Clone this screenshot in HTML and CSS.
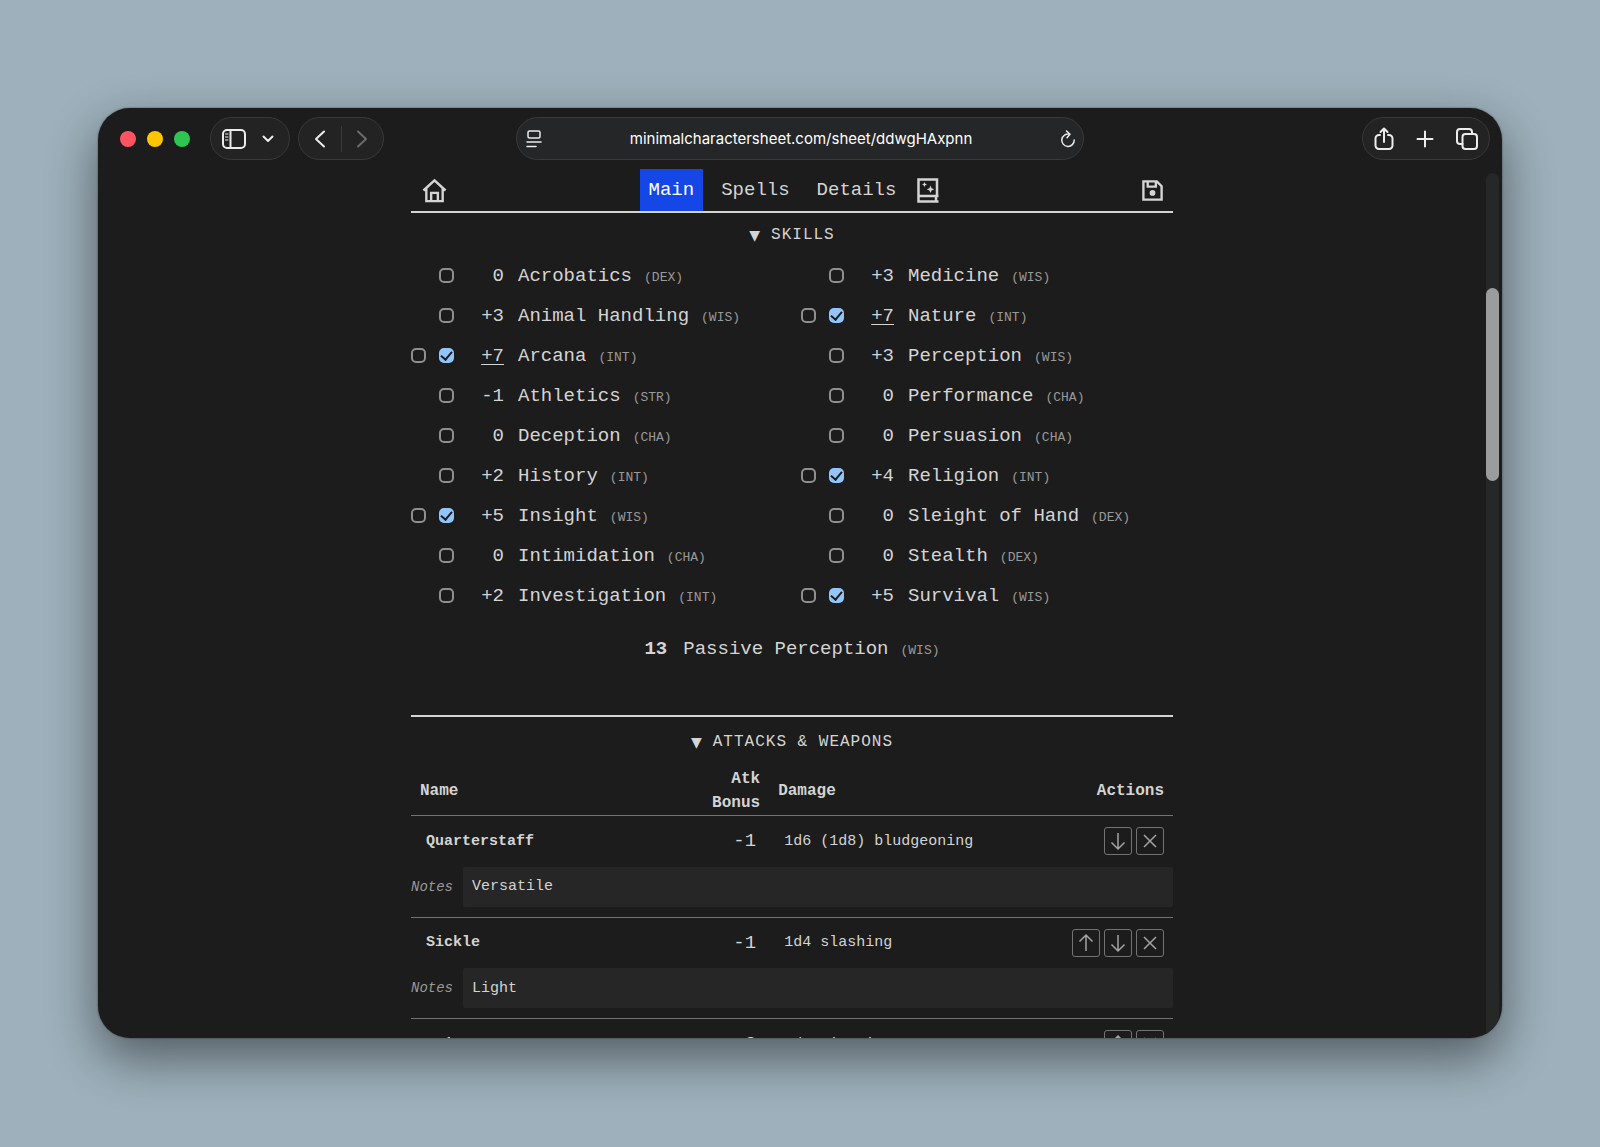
FILE: index.html
```html
<!DOCTYPE html>
<html lang="en">

<head>
    <meta charset="UTF-8">
    <meta name="viewport" content="width=device-width, initial-scale=1.0">
    <title>Minimal Character Sheet</title>
    <link rel="stylesheet" href="styles.css">
</head>

<body>
    <div class="window">
        <header class="toolbar">
            <div class="toolbar-left">
                <div class="lights">
                    <span class="light red"></span>
                    <span class="light yellow"></span>
                    <span class="light green"></span>
                </div>
                <div class="pill pill-sidebar">
                    <button aria-label="Sidebar">
                        <svg width="24" height="20" viewBox="0 0 24 20">
                            <rect x="1" y="1" width="22" height="18" rx="4" />
                            <path d="M8.500 1v18" />
                            <path class="thin" d="M3.500 5h2.500M3.500 8h2.500M3.500 11h2.500" />
                        </svg>
                    </button>
                    <button aria-label="Tab groups">
                        <svg width="12" height="8" viewBox="0 0 12 8">
                            <path d="M1.500 1.500L6 6l4.500-4.500" />
                        </svg>
                    </button>
                </div>
                <div class="pill pill-nav">
                    <button aria-label="Back">
                        <svg width="12" height="18" viewBox="0 0 12 18">
                            <path d="M10 1.500L2 9l8 7.500" />
                        </svg>
                    </button>
                    <span class="divider"></span>
                    <button class="off" aria-label="Forward">
                        <svg width="12" height="18" viewBox="0 0 12 18">
                            <path d="M2 1.500L10 9l-8 7.500" />
                        </svg>
                    </button>
                </div>
            </div>

            <div class="pill address">
                <button aria-label="Page menu">
                    <svg class="line" width="16" height="18" viewBox="0 0 16 18">
                        <rect x="2" y="1" width="12" height="7" rx="1.500" />
                        <path d="M1 12h14M1 16.500h9" />
                    </svg>
                </button>
                <input type="text" id="url" aria-label="Address" value="minimalcharactersheet.com/sheet/ddwgHAxpnn">
                <button aria-label="Reload">
                    <svg class="line" width="16" height="18" viewBox="0 0 16 18">
                        <path d="M9.500 4.200A6.200 6.200 0 1 0 14.200 10M6.500 1L10 4.300L7 7.800" />
                    </svg>
                </button>
            </div>

            <div class="toolbar-right">
                <div class="pill pill-actions">
                    <button aria-label="Share">
                        <svg width="20" height="24" viewBox="0 0 20 24">
                            <path d="M6 8H5a3.500 3.500 0 0 0-3.500 3.500v7A3.500 3.500 0 0 0 5 22h10a3.500 3.500 0 0 0 3.500-3.500v-7A3.500 3.500 0 0 0 15 8h-1M10 15V2M6.500 5L10 1.500L13.500 5" />
                        </svg>
                    </button>
                    <button aria-label="New tab">
                        <svg width="18" height="18" viewBox="0 0 18 18">
                            <path d="M9 1.500v15M1.500 9h15" />
                        </svg>
                    </button>
                    <button aria-label="Show tabs">
                        <svg width="22" height="22" viewBox="0 0 22 22">
                            <rect x="6.500" y="6" width="14.500" height="15" rx="3" />
                            <path d="M6.500 16H4a3 3 0 0 1-3-3V4a3 3 0 0 1 3-3h9a3 3 0 0 1 3 3v2" />
                        </svg>
                    </button>
                </div>
            </div>
        </header>

        <div class="viewport">
            <main class="page">
                <nav class="tabs">
                    <a class="icon-link" href="#" aria-label="Home">
                        <svg width="25" height="25" viewBox="0 0 26 26">
                            <path d="M1.500 13L13 2.500L24.500 13M4.500 11v13h17V11M9.500 24v-8.500h7v8.500" />
                        </svg>
                    </a>
                    <div class="tab-list">
                        <button class="tab active">Main</button>
                        <button class="tab">Spells</button>
                        <button class="tab">Details</button>
                        <button class="icon-link book" aria-label="Spellbook">
                            <svg width="22" height="25" viewBox="0 0 22 25">
                                <path d="M20 18V1.500H1.500v22H21.500M1.500 18h20M19 18v5.500" />
                                <path class="solid" d="M7.500 4l.8 1.700L10 6.500l-1.700.8L7.500 9l-.8-1.700L5 6.500l1.700-.8zM13.500 7.500l1.100 2.700 2.700 1.100-2.700 1.100-1.100 2.700-1.100-2.700-2.700-1.100 2.700-1.100z" />
                            </svg>
                        </button>
                    </div>
                    <button class="icon-link" aria-label="Save">
                        <svg width="23" height="23" viewBox="0 0 24 24">
                            <path d="M2.500 2.500h14l5 5v14h-19zM7 2.500v5.500h8.500V2.500" />
                            <circle class="solid" cx="12" cy="14.500" r="3" />
                        </svg>
                    </button>
                </nav>

                <details class="section" open>
                    <summary><span class="arrow">▼</span>SKILLS</summary>
                    <div class="skills" id="skills"></div>
                    <p class="passive"><b>13</b><span>Passive Perception</span><small>(WIS)</small></p>
                </details>

                <details class="section attacks" open>
                    <summary><span class="arrow">▼</span>ATTACKS &amp; WEAPONS</summary>
                    <table>
                        <thead>
                            <tr>
                                <th class="col-name">Name</th>
                                <th class="col-bonus">Atk Bonus</th>
                                <th class="col-damage">Damage</th>
                                <th class="col-actions">Actions</th>
                            </tr>
                        </thead>
                        <tbody id="attacksTable"></tbody>
                    </table>
                </details>
            </main>
            <div class="scrollbar">
                <div class="thumb"></div>
            </div>
        </div>
    </div>

    <script>
        // name, ability, modifier, proficient
        const skills = [
            ['Acrobatics', 'DEX', '0', false],
            ['Animal Handling', 'WIS', '+3', false],
            ['Arcana', 'INT', '+7', true, 'custom'],
            ['Athletics', 'STR', '-1', false],
            ['Deception', 'CHA', '0', false],
            ['History', 'INT', '+2', false],
            ['Insight', 'WIS', '+5', true],
            ['Intimidation', 'CHA', '0', false],
            ['Investigation', 'INT', '+2', false],
            ['Medicine', 'WIS', '+3', false],
            ['Nature', 'INT', '+7', true, 'custom'],
            ['Perception', 'WIS', '+3', false],
            ['Performance', 'CHA', '0', false],
            ['Persuasion', 'CHA', '0', false],
            ['Religion', 'INT', '+4', true],
            ['Sleight of Hand', 'DEX', '0', false],
            ['Stealth', 'DEX', '0', false],
            ['Survival', 'WIS', '+5', true]
        ];

        const attacks = [
            { name: 'Quarterstaff', bonus: '-1', damage: '1d6 (1d8) bludgeoning', notes: 'Versatile' },
            { name: 'Sickle', bonus: '-1', damage: '1d4 slashing', notes: 'Light' },
            { name: 'Sai', bonus: '+2', damage: '1d4 piercing', notes: '' }
        ];

        const icons = {
            up: 'M10 18V2M3.500 8.500L10 2l6.500 6.500',
            down: 'M10 2v16M3.500 11.500L10 18l6.500-6.500',
            delete: 'M4 4l12 12M16 4L4 16'
        };

        function actionButton(action) {
            return `<button class="action" aria-label="${action}">
                <svg width="20" height="20" viewBox="0 0 20 20"><path d="${icons[action]}" /></svg>
            </button>`;
        }

        function displaySkills() {
            document.getElementById('skills').innerHTML = skills.map(([name, ability, mod, proficient, custom], i) => `
                <div class="skill">
                    <span class="checks">
                        ${proficient ? `<input type="checkbox" aria-label="${name} expertise">` : ''}
                        <input type="checkbox" id="skill${i}" ${proficient ? 'checked' : ''}>
                    </span>
                    <span class="mod ${custom || ''}"><span>${mod}</span></span>
                    <label for="skill${i}">${name}<small>(${ability})</small></label>
                </div>`).join('');
        }

        function displayAttacks() {
            document.getElementById('attacksTable').innerHTML = attacks.map((attack, i) => `
                <tr class="attack">
                    <td><input class="name" type="text" aria-label="Name" value="${attack.name}"></td>
                    <td class="bonus">${attack.bonus}</td>
                    <td><input type="text" aria-label="Damage" value="${attack.damage}"></td>
                    <td><div class="actions">
                        ${i > 0 ? actionButton('up') : ''}
                        ${i < attacks.length - 1 ? actionButton('down') : ''}
                        ${actionButton('delete')}
                    </div></td>
                </tr>
                <tr class="notes">
                    <td colspan="4"><div class="notes-row">
                        <label for="notes${i}">Notes</label>
                        <input type="text" id="notes${i}" value="${attack.notes}">
                    </div></td>
                </tr>`).join('');
        }

        displaySkills();
        displayAttacks();
    </script>
</body>

</html>
```
FILE: styles.css
```css
* {
    box-sizing: border-box;
}

body {
    margin: 0;
    height: 100vh;
    padding: 108px 98px 109px;
    background-color: #9db0bb;
    color: #d4d4d4;
    font-family: "Liberation Mono", monospace;
    font-size: 19px;
    overflow: hidden;
}

button,
input {
    font: inherit;
    color: inherit;
    background: none;
    border: none;
    padding: 0;
    margin: 0;
}

button {
    cursor: pointer;
    display: flex;
    align-items: center;
    justify-content: center;
}

svg {
    display: block;
    fill: none;
    stroke: currentColor;
    stroke-width: 2;
}

svg .solid {
    fill: currentColor;
    stroke: none;
}

.window {
    height: 100%;
    display: flex;
    flex-direction: column;
    background-color: #1c1c1c;
    border-radius: 32px;
    overflow: hidden;
    box-shadow: 0 0 2px rgba(0, 0, 0, 0.5), 0 20px 50px rgba(0, 0, 0, 0.48);
}

/* browser toolbar */
.toolbar {
    display: grid;
    grid-template-columns: 1fr 568px 1fr;
    padding: 9px 12px;
    color: #ececec;
}

.toolbar svg {
    stroke-linecap: round;
    stroke-linejoin: round;
}

.toolbar svg .thin {
    stroke-width: 1;
}

.toolbar svg.line {
    stroke-width: 1.500;
}

.toolbar-left,
.toolbar-right,
.lights,
.pill {
    display: flex;
    align-items: center;
}

.toolbar-left {
    gap: 8px;
}

.toolbar-right {
    justify-content: flex-end;
}

.lights {
    gap: 11px;
    margin: 0 12px 0 10px;
}

.light {
    width: 16px;
    height: 16px;
    border-radius: 50%;
}

.red {
    background-color: #ff5362;
}

.yellow {
    background-color: #ffc600;
}

.green {
    background-color: #30c552;
}

.pill {
    height: 43px;
    border: 1px solid #3a3a3a;
    border-radius: 22px;
    background-color: #232323;
}

.pill-sidebar {
    width: 80px;
    padding: 0 15px 0 11px;
    justify-content: space-between;
}

.pill-nav {
    width: 86px;
    padding: 0 15px;
    justify-content: space-between;
}

.divider {
    width: 1px;
    height: 26px;
    background-color: #3a3a3a;
}

.off {
    color: #6a6a6a;
}

.address {
    padding: 0 7px 0 9px;
    background-color: #252627;
}

.address input {
    flex: 1;
    min-width: 0;
    text-align: center;
    color: #fff;
    font-family: Inter, sans-serif;
    font-size: 15px;
}

.pill-actions {
    width: 128px;
    padding: 0 11px;
    justify-content: space-between;
}

/* page */
.viewport {
    flex: 1;
    min-height: 0;
    display: flex;
}

.page {
    flex: 1;
    overflow: hidden;
}

.tabs,
.section {
    max-width: 762px;
    margin: 0 auto;
}

.tabs {
    display: flex;
    align-items: center;
    justify-content: space-between;
    border-bottom: 2px solid #d4d4d4;
}

.tab-list {
    display: flex;
    align-items: center;
    gap: 9px;
}

.tab {
    height: 42px;
    padding: 0 9px;
}

.tab.active {
    background-color: #1447e6;
    color: #fff;
}

.icon-link {
    color: inherit;
    padding: 0 9px 0 11px;
}

.icon-link.book {
    padding: 0 7px 0 3px;
}

.icon-link svg {
    stroke-width: 2.500;
}

.scrollbar {
    width: 13px;
    margin: 4px 3px 0 0;
    border-radius: 7px 7px 0 0;
    background-color: #262828;
    padding-top: 115px;
}

.thumb {
    height: 193px;
    border-radius: 7px;
    background-color: #9b9d9c;
}

summary {
    display: flex;
    align-items: center;
    justify-content: center;
    height: 43px;
    font-size: 16px;
    letter-spacing: 1px;
}

.arrow {
    font-family: "DejaVu Sans", sans-serif;
    font-size: 14px;
    margin-right: 10px;
}

small {
    font-size: 13px;
    color: #999;
}

/* skills */
.skills {
    display: grid;
    grid-template-columns: 1fr 1fr;
    grid-template-rows: repeat(9, 40px);
    grid-auto-flow: column;
    column-gap: 18px;
}

.skill {
    display: flex;
    align-items: center;
}

.skill small {
    margin-left: 12px;
}

.checks {
    display: flex;
    justify-content: flex-end;
    gap: 13px;
    width: 43px;
    padding-bottom: 2px;
}

.checks input {
    appearance: none;
    display: flex;
    align-items: center;
    justify-content: center;
    width: 15px;
    height: 15px;
    border: 2px solid #8f8f8f;
    border-radius: 5px;
}

.checks input:checked {
    border-color: #93c5fd;
    background-color: #93c5fd;
}

.checks input:checked::after {
    content: "";
    flex: none;
    width: 5px;
    height: 9px;
    margin-bottom: 2px;
    border: solid #1c1c1c;
    border-width: 0 2px 2px 0;
    transform: rotate(40deg);
}

.mod {
    width: 50px;
    margin-right: 14px;
    text-align: right;
}

.custom span {
    text-decoration: underline;
    text-underline-offset: 3px;
}

.passive {
    display: flex;
    align-items: baseline;
    justify-content: center;
    margin: 22px 0 55px;
}

.passive span {
    margin: 0 12px 0 16px;
}

/* attacks */
.attacks {
    border-top: 2px solid #d4d4d4;
}

.attacks summary {
    height: 50px;
}

table {
    width: 100%;
    table-layout: fixed;
    border-collapse: collapse;
}

th,
td {
    padding: 0;
    text-align: left;
}

th {
    padding: 0 9px;
    font-size: 16px;
    line-height: 24px;
}

thead tr,
.notes {
    border-bottom: 1px solid #737373;
}

.col-name {
    width: 38%;
}

.col-bonus {
    width: 9%;
}

.col-damage {
    width: 36%;
}

.col-bonus,
.col-actions {
    text-align: right;
}

.attack td {
    height: 51px;
}

.attack td.bonus {
    text-align: right;
    padding-right: 13px;
}

.attack input {
    width: 100%;
    padding: 0 15px 4px;
    font-size: 15px;
}

.attack .name {
    font-weight: bold;
}

.actions {
    display: flex;
    justify-content: flex-end;
    gap: 4px;
    padding-right: 9px;
}

.action {
    width: 28px;
    height: 28px;
    border: 1px solid #737373;
    border-radius: 3px;
    color: #a3a3a3;
}

.action svg {
    stroke-width: 1.500;
}

.notes-row {
    display: flex;
    align-items: center;
    gap: 10px;
    padding-bottom: 10px;
}

.notes-row label {
    font-size: 14px;
    font-style: italic;
    color: #999;
}

.notes-row input {
    flex: 1;
    min-width: 0;
    height: 40px;
    padding: 0 9px;
    border-radius: 2px;
    background-color: #262626;
    font-size: 15px;
}
```
